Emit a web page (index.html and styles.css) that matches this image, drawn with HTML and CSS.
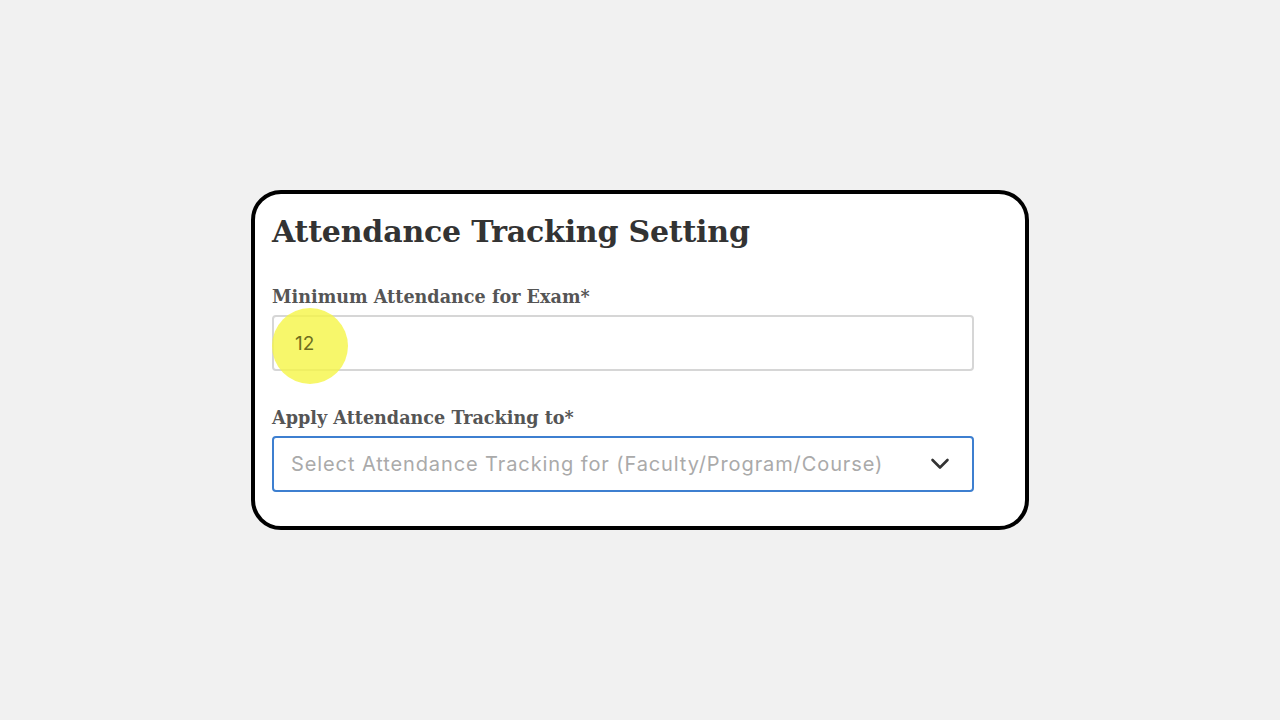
FILE: index.html
```html
<!DOCTYPE html>
<html>
<head>
<meta charset="utf-8">
<link rel="stylesheet" href="styles.css">
</head>
<body>
<div class="page">
  <div class="card">
    <h1 class="title">Attendance Tracking Setting</h1>
    <div class="field">
      <label class="label">Minimum Attendance for Exam*</label>
      <div class="input">
        <span class="highlight"></span>
        <span class="value">12</span>
      </div>
    </div>
    <div class="field field-2">
      <label class="label">Apply Attendance Tracking to*</label>
      <div class="select">
        <span class="placeholder">Select Attendance Tracking for (Faculty/Program/Course)</span>
        <svg class="chev" width="20" height="12" viewBox="0 0 20 12"><path d="M2.5 2 L10 9.5 L17.5 2" fill="none" stroke="#333" stroke-width="2.6" stroke-linecap="round" stroke-linejoin="round"/></svg>
      </div>
    </div>
  </div>
</div>
</body>
</html>
```
FILE: styles.css
```css
* { box-sizing: border-box; }
html, body { margin: 0; padding: 0; }
body { background: #f1f1f1; width: 1280px; height: 720px; overflow: hidden; }
.page { display: flex; padding-top: 190px; padding-left: 251px; }
.card {
  width: 778px;
  height: 340px;
  background: #fff;
  border: 4px solid #000;
  border-radius: 30px;
  padding: 16px 51px 0 17px;
}
.title {
  margin: 0;
  font-family: "DejaVu Serif", serif;
  font-weight: bold;
  font-size: 30px;
  line-height: 44px;
  color: #333;
  letter-spacing: -0.2px;
}
.field { margin-top: 31px; }
.field-2 { margin-top: 35px; }
.label {
  display: block;
  font-family: "DejaVu Serif", serif;
  font-weight: bold;
  font-size: 17.6px;
  line-height: 24px;
  color: #555;
  margin-bottom: 6px;
}
.input {
  position: relative;
  height: 56px;
  border: 2px solid #d6d6d6;
  border-radius: 4px;
  display: flex;
  align-items: center;
  padding-left: 21px;
}
.value {
  position: relative;
  font-family: "Inter", sans-serif;
  font-size: 19px;
  color: #6e6e1e;
}
.highlight {
  position: absolute;
  left: -2px;
  top: -9px;
  width: 76px;
  height: 76px;
  border-radius: 50%;
  background: rgba(245, 245, 70, 0.8);
}
.select {
  height: 56px;
  border: 2px solid #3d7fd0;
  border-radius: 4px;
  display: flex;
  align-items: center;
  justify-content: space-between;
  padding: 0 22px 0 17px;
}
.placeholder {
  font-family: "Inter", sans-serif;
  font-size: 20px;
  letter-spacing: 0.9px;
  color: #aaa;
}
.chev { display: block; }
```
